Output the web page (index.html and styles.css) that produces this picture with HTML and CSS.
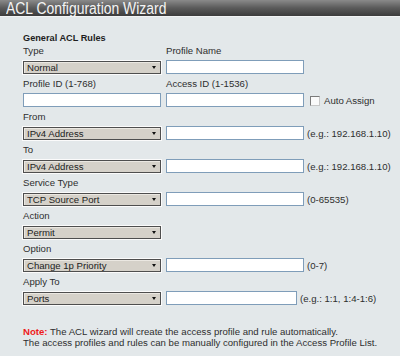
FILE: index.html
```html
<!DOCTYPE html>
<html>
<head>
<meta charset="utf-8">
<title>ACL Configuration Wizard</title>
<link rel="stylesheet" href="styles.css">
</head>
<body>
<div class="titlebar"><span class="title">ACL Configuration Wizard</span></div>
<div class="panel">
  <div class="heading">General ACL Rules</div>
  <div class="form">
    <div class="lbl">Type</div><div class="lbl">Profile Name</div><div></div>
    <div class="ctl"><div class="sel"><span>Normal</span><i class="arr"></i></div></div>
    <div class="ctl"><div class="inp"></div></div><div></div>

    <div class="lbl">Profile ID (1-768)</div><div class="lbl">Access ID (1-1536)</div><div></div>
    <div class="ctl"><div class="inp"></div></div>
    <div class="ctl"><div class="inp"></div></div>
    <div class="ctl extra"><span class="chk"></span><span class="chklbl">Auto Assign</span></div>

    <div class="lbl">From</div><div></div><div></div>
    <div class="ctl"><div class="sel"><span>IPv4 Address</span><i class="arr"></i></div></div>
    <div class="ctl"><div class="inp"></div></div>
    <div class="ctl hint">(e.g.: 192.168.1.10)</div>

    <div class="lbl">To</div><div></div><div></div>
    <div class="ctl"><div class="sel"><span>IPv4 Address</span><i class="arr"></i></div></div>
    <div class="ctl"><div class="inp"></div></div>
    <div class="ctl hint">(e.g.: 192.168.1.10)</div>

    <div class="lbl">Service Type</div><div></div><div></div>
    <div class="ctl"><div class="sel"><span>TCP Source Port</span><i class="arr"></i></div></div>
    <div class="ctl"><div class="inp"></div></div>
    <div class="ctl hint">(0-65535)</div>

    <div class="lbl">Action</div><div></div><div></div>
    <div class="ctl"><div class="sel"><span>Permit</span><i class="arr"></i></div></div>
    <div></div><div></div>

    <div class="lbl">Option</div><div></div><div></div>
    <div class="ctl"><div class="sel"><span>Change 1p Priority</span><i class="arr"></i></div></div>
    <div class="ctl"><div class="inp"></div></div>
    <div class="ctl hint">(0-7)</div>

    <div class="lbl">Apply To</div><div></div><div></div>
    <div class="ctl"><div class="sel"><span>Ports</span><i class="arr"></i></div></div>
    <div class="ctl"><div class="inp short"></div></div>
    <div class="ctl hint near">(e.g.: 1:1, 1:4-1:6)</div>
  </div>
  <div class="note">
    <div><b class="red">Note:</b> The ACL wizard will create the access profile and rule automatically.</div>
    <div>The access profiles and rules can be manually configured in the Access Profile List.</div>
  </div>
</div>
</body>
</html>
```
FILE: styles.css
```css
html, body {
  margin: 0;
  padding: 0;
  background: #e3e8ea;
  font-family: "Liberation Sans", Arial, sans-serif;
  color: #2e2e2e;
  overflow: hidden;
}
.titlebar {
  height: 16px;
  background: linear-gradient(#8a8a8a, #5a5a5a 50%, #3c3c3c);
  border-bottom: 1px solid #f2f4f5;
  overflow: hidden;
  position: relative;
}
.title {
  display: inline-block;
  color: #f4f4f4;
  font-size: 16px;
  line-height: 16px;
  margin-left: 6px;
  margin-top: 1px;
  transform: scaleX(0.87);
  transform-origin: left center;
  white-space: nowrap;
}
.panel {
  padding: 15px 0 0 23px;
}
.heading {
  font-weight: bold;
  font-size: 9.2px;
  line-height: 12px;
  height: 11px;
  color: #1e1e1e;
}
.form {
  display: grid;
  grid-template-columns: 138px 138px auto;
  column-gap: 5px;
  font-size: 9.6px;
}
.lbl {
  line-height: 14px;
  height: 17px;
  padding-top: 1px;
  white-space: nowrap;
}
.ctl {
  height: 15px;
  display: flex;
  align-items: flex-start;
  white-space: nowrap;
}
.sel {
  box-sizing: border-box;
  width: 138px;
  height: 13px;
  border: 1px solid #4e4e4e;
  box-shadow: 0 0 0 1px #fbfbfb, inset 1px 1px 0 #ebe8e2;
  background: #d5d1c9;
  display: flex;
  align-items: center;
  justify-content: space-between;
  padding-left: 3px;
  color: #222;
  line-height: 11px;
}
.arr {
  width: 0;
  height: 0;
  border-left: 2.5px solid transparent;
  border-right: 2.5px solid transparent;
  border-top: 3px solid #111;
  margin-right: 4px;
}
.inp {
  box-sizing: border-box;
  width: 138px;
  height: 14px;
  margin-top: -1px;
  border: 1px solid #7f9db9;
  background: #fff;
}
.inp.short {
  width: 131px;
}
.hint {
  margin-left: -2px;
  line-height: 13px;
}
.hint.near {
  margin-left: -9px;
}
.extra {
  align-items: center;
  height: 13px;
}
.chk {
  box-sizing: border-box;
  width: 10px;
  height: 10px;
  margin-left: 1px;
  border: 1px solid #7a7a7a;
  border-right-color: #c8c8c8;
  border-bottom-color: #c8c8c8;
  background: #fafafa;
}
.chklbl {
  margin-left: 4px;
}
.note {
  margin-top: 19px;
  font-size: 9.6px;
  line-height: 11px;
}
.red {
  color: #ee1b1b;
}
```
